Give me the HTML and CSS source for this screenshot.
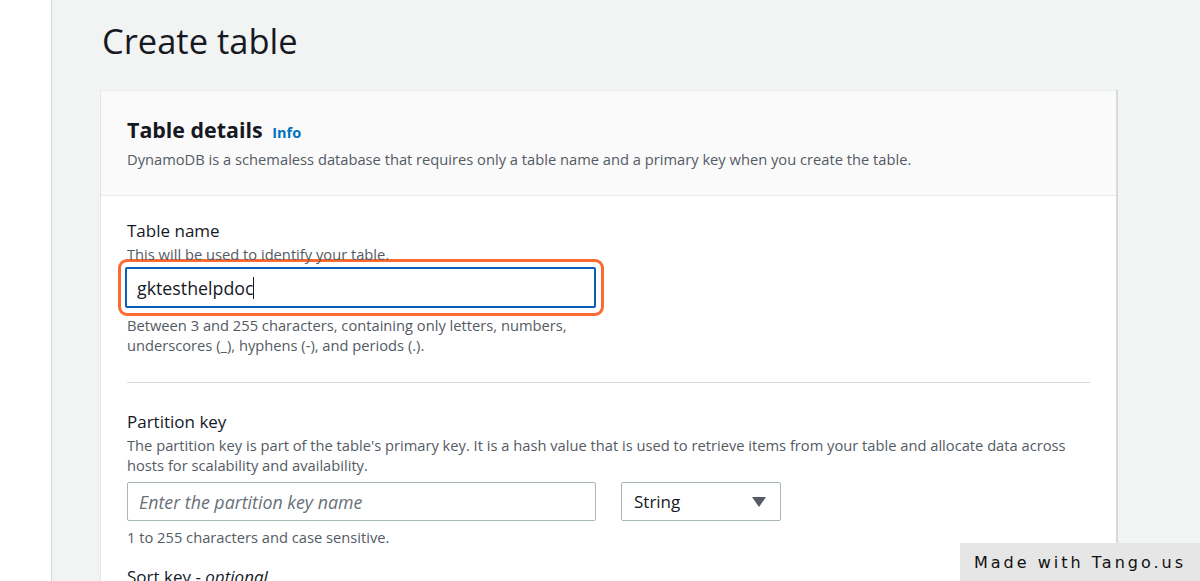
FILE: index.html
```html
<!DOCTYPE html>
<html>
<head>
<meta charset="utf-8">
<link rel="stylesheet" href="styles.css">
</head>
<body>
<div class="layout">
  <div class="sidebar"></div>
  <main class="main">
    <h1 class="page-title">Create table</h1>
    <section class="card">
      <header class="card-header">
        <h2 class="card-title">Table details <a class="info">Info</a></h2>
        <p class="card-desc">DynamoDB is a schemaless database that requires only a table name and a primary key when you create the table.</p>
      </header>
      <div class="card-body">
        <div class="field">
          <div class="label">Table name</div>
          <div class="desc">This will be used to identify your table.</div>
          <div class="highlight">
            <div class="input focused">gktesthelpdoc<span class="caret"></span></div>
          </div>
          <div class="hint">Between 3 and 255 characters, containing only letters, numbers,<br>underscores (_), hyphens (-), and periods (.).</div>
        </div>
        <hr class="divider">
        <div class="field">
          <div class="label">Partition key</div>
          <div class="desc">The partition key is part of the table's primary key. It is a hash value that is used to retrieve items from your table and allocate data across hosts for scalability and availability.</div>
          <div class="row">
            <div class="input key-input placeholder">Enter the partition key name</div>
            <div class="select">String<span class="arrow"></span></div>
          </div>
          <div class="hint">1 to 255 characters and case sensitive.</div>
        </div>
        <div class="field sort">
          <div class="label">Sort key - <i>optional</i></div>
        </div>
      </div>
    </section>
  </main>
</div>
<div class="tango">Made with Tango.us</div>
</body>
</html>
```
FILE: styles.css
```css
html, body {
  margin: 0;
  padding: 0;
  height: 100%;
  overflow: hidden;
}
body {
  background: #ffffff;
  font-family: "Open Sans", "Liberation Sans", sans-serif;
  color: #16191f;
}
.layout {
  display: flex;
  height: 100%;
}
.sidebar {
  width: 51px;
  flex: none;
  background: #ffffff;
  border-right: 1px solid #d5dbdb;
}
.main {
  flex: 1;
  background: #f2f3f3;
  padding-left: 48px;
}
.page-title {
  margin: 0;
  padding: 17px 0 0 2px;
  font-size: 34.5px;
  font-weight: 400;
  line-height: 48px;
  color: #16191f;
  height: 90px;
  box-sizing: border-box;
}
.card {
  width: 1015px;
  background: #ffffff;
  border-top: 1px solid #eaeded;
  border-left: 1px solid #e3e6e6;
  box-shadow: 1px 0 0 #d5dbdb, 2px 0 0 #d5dbdb;
}
.card-header {
  background: #fafafa;
  border-bottom: 1px solid #eaeded;
  padding: 21px 26px 20px;
  height: 105px;
  box-sizing: border-box;
}
.card-title {
  margin: 0;
  font-size: 21.4px;
  font-weight: 700;
  line-height: 36px;
  color: #16191f;
}
.info {
  font-size: 14.5px;
  font-weight: 700;
  color: #0073bb;
  margin-left: 4px;
}
.card-desc {
  margin: -2px 0 0;
  font-size: 14.7px;
  line-height: 20px;
  color: #545b64;
}
.card-body {
  padding: 23px 26px 0;
}
.label {
  font-size: 17px;
  line-height: 24px;
  color: #16191f;
}
.desc {
  margin-top: 1px;
  font-size: 14.7px;
  line-height: 20px;
  color: #545b64;
}
.highlight {
  width: 486px;
  height: 57px;
  box-sizing: border-box;
  margin: -5px 0 0 -9px;
  border: 3px solid #fc6a32;
  border-radius: 9px;
  padding: 5px 4px;
}
.input {
  height: 39px;
  box-sizing: border-box;
  border: 1px solid #aab7b8;
  border-radius: 2px;
  background: #fff;
  display: flex;
  align-items: center;
  padding-left: 11px;
  font-size: 17.8px;
  color: #16191f;
}
.focused {
  border: 2px solid #0a5eb8;
  height: 41px;
  width: 471px;
  padding-left: 10px;
}
.caret {
  display: inline-block;
  width: 1px;
  height: 22px;
  background: #16191f;
  margin-left: 0;
}
.hint {
  font-size: 14.7px;
  line-height: 20px;
  color: #545b64;
  margin-top: -1px;
}
.divider {
  border: 0;
  border-top: 1px solid #d5dbdb;
  margin: 27px 0 27px;
}
.row {
  display: flex;
  gap: 25px;
  margin-top: 7px;
  margin-bottom: 6px;
}
.row + .hint {
  margin-top: 0;
}
.key-input {
  width: 469px;
}
.placeholder {
  font-style: italic;
  color: #687078;
}
.select {
  width: 160px;
  height: 39px;
  box-sizing: border-box;
  border: 1px solid #aab7b8;
  border-radius: 2px;
  background: #fff;
  display: flex;
  align-items: center;
  justify-content: space-between;
  padding: 0 14px 0 12px;
  font-size: 17px;
  color: #16191f;
}
.arrow {
  width: 0;
  height: 0;
  border-left: 7px solid transparent;
  border-right: 7px solid transparent;
  border-top: 10px solid #545b64;
}
.sort {
  margin-top: 18px;
}
.tango {
  position: fixed;
  right: 0;
  bottom: 0;
  width: 240px;
  height: 38px;
  background: #e6e6e6;
  color: #111;
  font-family: "DejaVu Sans", sans-serif;
  font-size: 16px;
  letter-spacing: 3px;
  display: flex;
  align-items: center;
  justify-content: center;
}
```
